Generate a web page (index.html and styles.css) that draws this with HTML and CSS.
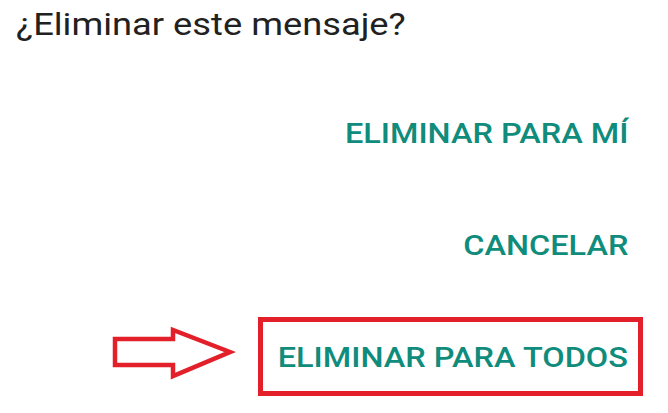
FILE: index.html
```html
<!DOCTYPE html>
<html lang="es">
<head>
<meta charset="utf-8">
<title>¿Eliminar este mensaje?</title>
<link rel="stylesheet" href="styles.css">
</head>
<body>
<div class="dialog">
  <h1 class="title"><span class="title-text">¿Eliminar este mensaje?</span></h1>
  <div class="actions">
    <div class="row"><button class="btn"><span class="btn-text">ELIMINAR PARA MÍ</span></button></div>
    <div class="row"><button class="btn"><span class="btn-text">CANCELAR</span></button></div>
    <div class="row">
      <svg class="arrow" width="125" height="64" viewBox="0 0 125 64" aria-hidden="true">
        <polygon points="4,14 62,14 62,5 119,27 62,51 62,40 4,40" fill="none" stroke="#e3202a" stroke-width="4.5" stroke-linejoin="miter" stroke-miterlimit="10"/>
      </svg>
      <button class="btn btn-marked"><span class="btn-text">ELIMINAR PARA TODOS</span></button>
    </div>
  </div>
</div>
</body>
</html>
```
FILE: styles.css
```css
html, body {
  margin: 0;
  padding: 0;
  background: #ffffff;
}
body {
  width: 668px;
  height: 413px;
  overflow: hidden;
  font-family: Roboto, "Noto Sans", Arial, sans-serif;
}
.dialog {
  padding-top: 5px;
}
.title {
  margin: 0;
  padding-left: 16px;
  font-size: 31px;
  font-weight: 400;
  line-height: 40px;
  color: #212121;
}
.title-text {
  display: inline-block;
  transform: scaleX(1.17);
  transform-origin: left center;
}
.actions {
  display: flex;
  flex-direction: column;
  gap: 33px;
  padding-top: 48px;
  padding-right: 25px;
}
.row {
  display: flex;
  align-items: center;
  justify-content: flex-end;
}
.btn {
  font-family: Roboto, "Noto Sans", Arial, sans-serif;
  font-size: 28px;
  font-weight: 500;
  line-height: 66px;
  color: #0f8c7b;
  background: transparent;
  border: 5px solid transparent;
  padding: 3px 10px 0 18px;
  margin: 0;
  white-space: nowrap;
}
.btn-text {
  display: inline-block;
  transform: scaleX(1.16);
  transform-origin: right center;
}
.btn-marked {
  border-color: #e3202a;
  padding-left: 63px;
}
.arrow {
  display: block;
  margin-right: 22px;
}
```
